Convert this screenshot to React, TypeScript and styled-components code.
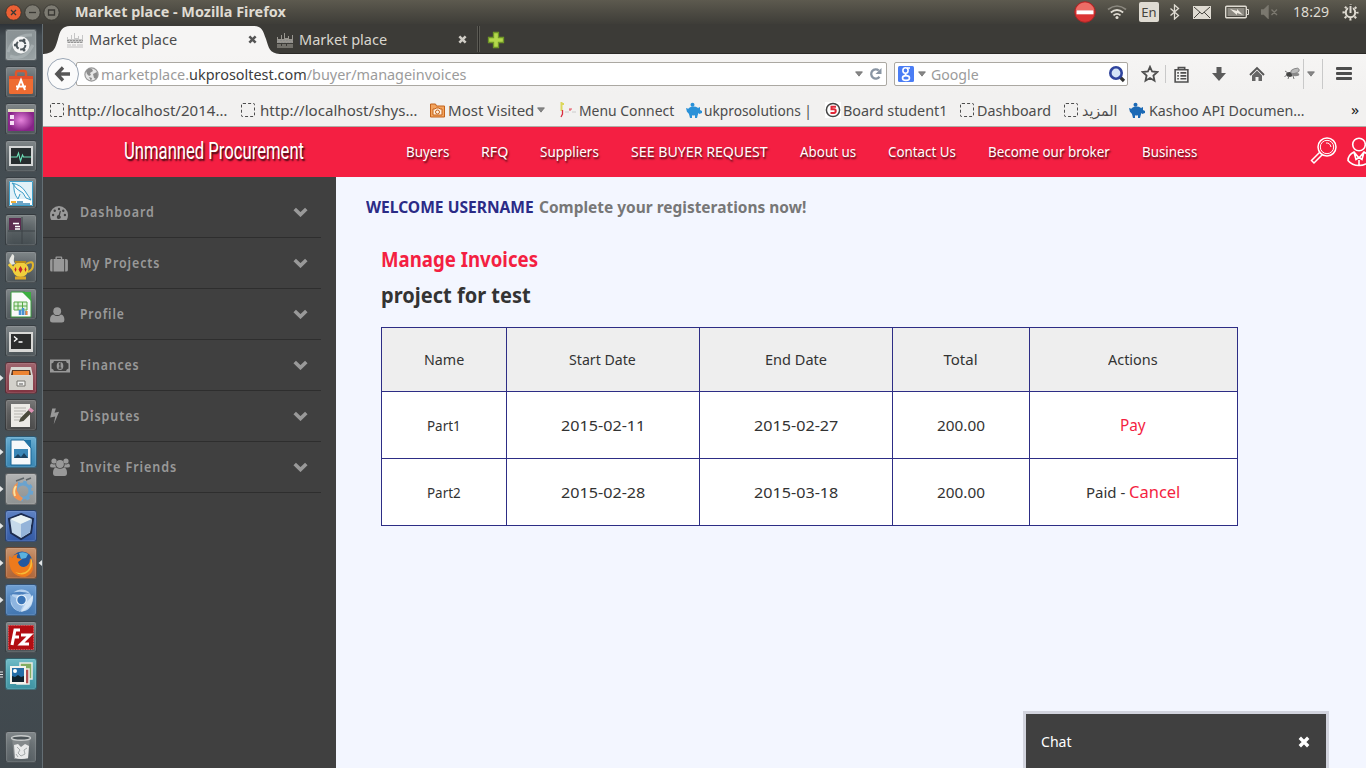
import React, { useLayoutEffect, useRef, useState } from "react";
import styled, { createGlobalStyle } from "styled-components";

const UI = `"Noto Sans", "Open Sans", "DejaVu Sans", sans-serif`;

const Global = createGlobalStyle`
  * { box-sizing: border-box; }
  body { margin: 0; overflow: hidden; font-family: ${UI}; }
  svg { display: block; flex: none; }
`;

/* ---------- text fitted to a fixed width ---------- */

const FitBox = styled.span<{ $w: number; $ml: number }>`
  display: block;
  flex: none;
  width: ${(p) => p.$w}px;
  margin-left: ${(p) => p.$ml}px;
  white-space: pre;
`;
const FitInner = styled.span`
  display: inline-block;
  transform-origin: 0 50%;
`;
function Fit({ w, ml = 0, children, className }: { w: number; ml?: number; children: React.ReactNode; className?: string }) {
  const ref = useRef<HTMLSpanElement>(null);
  const [k, setK] = useState(1);
  useLayoutEffect(() => {
    if (ref.current) setK(w / ref.current.offsetWidth);
  }, [w, children]);
  return (
    <FitBox $w={w} $ml={ml} className={className}>
      <FitInner ref={ref} style={{ transform: `scaleX(${k})` }}>{children}</FitInner>
    </FitBox>
  );
}

const Slot = styled.div<{ $ml?: number; $w?: number }>`
  flex: none;
  display: flex;
  justify-content: center;
  margin-left: ${(p) => p.$ml ?? 0}px;
  width: ${(p) => (p.$w ? p.$w + "px" : "auto")};
`;

/* ---------- desktop ---------- */

const Desktop = styled.div`
  width: 1366px;
  height: 768px;
  display: flex;
  flex-direction: column;
  overflow: hidden;
`;
const TopPanel = styled.div`
  height: 24px;
  flex: none;
  display: flex;
  align-items: center;
  padding-left: 5px;
  background: linear-gradient(#5d5a4f, #4d4b43 50%, #3e3d38);
`;
const PanelTitle = styled(Fit)`
  font-size: 14px;
  font-weight: 700;
  line-height: 24px;
  color: #dfdbd2;
`;
const Clock = styled(Fit)`
  font-size: 14.5px;
  line-height: 22px;
  padding-bottom: 2px;
  color: #dfdbd2;
`;
const LangBox = styled.div`
  width: 20px;
  height: 20px;
  margin-left: 12px;
  border-radius: 2px;
  background: #dfdbd2;
  color: #45433d;
  font-size: 13px;
  line-height: 20px;
  display: flex;
  justify-content: center;
`;
const Spacer = styled.div`
  flex: 1;
`;
const Workspace = styled.div`
  flex: 1;
  display: flex;
  min-height: 0;
`;
const Launcher = styled.div`
  width: 43px;
  flex: none;
  display: flex;
  flex-direction: column;
  gap: 5px;
  padding: 5px 0 5px 5px;
  background: linear-gradient(#2e3338 0, #434b50 12px, #465056 60%, #40484d);
  border-right: 1px solid #646e74;
`;
const Tile = styled.div<{ $bg: string; $last?: boolean }>`
  position: relative;
  width: 32px;
  height: 32px;
  flex: none;
  margin-top: ${(p) => (p.$last ? "36px" : "0")};
  border-radius: 3px;
  background: ${(p) => p.$bg};
  border: 1px solid rgba(30, 36, 40, 0.45);
  box-shadow: inset 0 0 0 1px rgba(255, 255, 255, 0.1), inset 0 6px 8px rgba(255, 255, 255, 0.12);
  display: flex;
  align-items: center;
  justify-content: center;
`;
const Pip = styled.svg<{ $right?: boolean }>`
  position: absolute;
  top: 12px;
  ${(p) => (p.$right ? "right: -6px;" : "left: -6px;")}
`;

const GREY = "linear-gradient(#70777a, #4c5458)";
type App = { bg: string; run?: boolean; multi?: boolean; focus?: boolean; last?: boolean; art: React.ReactNode };
const apps: App[] = [
  { bg: "linear-gradient(#7d8689, #99a2a4)", art: <><path d="M2 22Q8 4 26 5M4 26Q18 32 27 15" stroke="#b3babc" strokeWidth="3" fill="none" opacity=".6" /><circle cx="15" cy="15" r="8.500" fill="#f4f5f5" /><circle cx="15" cy="15" r="4.400" fill="none" stroke="#4c555a" strokeWidth="2" strokeDasharray="7.600 1.600" /><circle cx="9.300" cy="15" r="1.500" fill="#4c555a" /><circle cx="18" cy="9.900" r="1.500" fill="#4c555a" /><circle cx="18" cy="20.100" r="1.500" fill="#4c555a" /></> },
  { bg: GREY, art: <><path d="M10 9V6q0-2 2-2h6q2 0 2 2v3" stroke="#e0562b" strokeWidth="2.400" fill="none" /><path d="M3 9h24v16.500q0 1.500-1.500 1.500H4.500Q3 27 3 25.500z" fill="#ee6c32" /><path d="M3 9h24v3H3z" fill="#e14f2c" /><path d="M11 23l4-10 4 10M10 19.500h10" stroke="#fff" strokeWidth="2" fill="none" /></> },
  { bg: GREY, art: <><defs><radialGradient id="pu"><stop offset="0" stopColor="#e684dc" /><stop offset="1" stopColor="#872487" /></radialGradient></defs><path d="M2 5h26v22H2z" fill="url(#pu)" /><path d="M2 5h26v3H2z" fill="#e9e4c4" /><path d="M4 11h4v4H4zM4 17h4v4H4z" fill="#f6dff5" /></> },
  { bg: GREY, art: <><path d="M3 5h24v20H3z" fill="#d5d7d7" /><path d="M5 7h20v16H5z" fill="#262c2e" /><path d="M5 16h6l1.500-4 2 8 2-6 1 2H25" stroke="#6fe0b8" fill="none" strokeWidth="1.100" /></> },
  { bg: GREY, art: <><path d="M3 3h24v25H3z" fill="#fff" /><path d="M3.500 3.500h23v24h-23z" fill="none" stroke="#3d9dc7" /><path d="M4 4h22v17H4z" fill="#e2f1f8" /><path d="M6 5q9 2 13 8t6 9l-5-2-3-5-6-4zM8 6q-1 9 4 15l2-5" fill="#f5fafc" stroke="#3d9dc7" /><path d="M5 24h5" stroke="#f1b13b" strokeWidth="2" /><path d="M11 24h6M6 26h18" stroke="#3e88b5" strokeWidth="1.500" /></> },
  { bg: "linear-gradient(#6b7275, #454d51)", art: <><path d="M16 2v27M2 16h27" stroke="#3c4347" /><path d="M3 3h12v12H3z" fill="#5b2c50" /><path d="M7 8.500h6M9 11.500h5M9 14h5" stroke="#fff" strokeWidth="1.400" /></> },
  { bg: GREY, art: <><path d="M5 13q-3-4-1-7t2-4q3 1 2 4t1 6" fill="#e7e7e2" /><path d="M20 12q7-4 7 1t-5 7" stroke="#e1b52a" strokeWidth="2" fill="none" /><ellipse cx="14.500" cy="17.500" rx="8" ry="7.500" fill="#f1cf3c" /><path d="M3 12l6 7" stroke="#f1cf3c" strokeWidth="3" /><path d="M9 10h11" stroke="#b98b1c" strokeWidth="2" /><path d="M9 26h11" stroke="#dca828" strokeWidth="3" /><path d="M14.500 14l2 3.500-2 3.500-2-3.500zM19.500 15l1 2.500-1 2.500-1-2.500zM9.500 15l1 2.500-1 2.500-1-2.500z" fill="#c6242c" /></> },
  { bg: GREY, art: <><path d="M5 3h14l6 7v18H5z" fill="#fafafa" stroke="#3a9b3e" /><path d="M16 3h9v9z" fill="#3cae40" /><path d="M8 13h13v8H8z" fill="#dff2d9" stroke="#57a846" /><path d="M8 17h13M12 13v8M16.500 13v8" stroke="#57a846" /><path d="M14 26v-5M17 26v-7M20 26v-4" stroke="#4a92d0" strokeWidth="2.500" /><path d="M20.500 26v-4" stroke="#f0883a" strokeWidth="2" /></> },
  { bg: GREY, art: <><path d="M3 6h24v20H3z" fill="#d8d8d6" /><path d="M5 8h20v15H5z" fill="#2c2d2d" /><path d="M8 10.500l3 2.500-3 2.500M12.500 16h4" stroke="#fff" strokeWidth="1.400" fill="none" /></> },
  { bg: "linear-gradient(#95535d, #813441)", run: true, art: <><path d="M5 4h20l2 9H3z" fill="#d9d7d2" /><path d="M6 7h18l1 5H5z" fill="#5e3a24" /><path d="M7 8h16v4H7z" fill="#ec8432" /><path d="M3 13h24v14H3z" fill="#d3d1cb" /><path d="M11 18h8v5h-8z" fill="#f2f2f0" stroke="#77756f" /><path d="M13 21h4" stroke="#555" /></> },
  { bg: "linear-gradient(#676767, #474747)", art: <><path d="M5 4h19v23H5z" fill="#eceae6" /><path d="M8 8h12M8 11h12M8 14h9M8 17h7M8 20h8" stroke="#b5b3ae" /><path d="M13 22l1.500-4L23 9.500l3 3-8.500 8.500z" fill="#4a4a3c" /><path d="M22 10l2.500-2.500 3.500 3L25.500 13z" fill="#dc92b4" /></> },
  { bg: "linear-gradient(#57a3cb, #3483b1)", run: true, art: <><path d="M5 3h13l7 8v17H5z" fill="#f5f8fa" stroke="#1a6696" /><path d="M18 3l7 8V3z" fill="#2274a5" /><path d="M8 12h14v9H8z" fill="#3b87b7" /><path d="M8 21l4-4 3 3 3-4 4 5z" fill="#1c4260" /></> },
  { bg: "linear-gradient(#a9abab, #8f9292)", run: true, art: <><circle cx="17" cy="17" r="7" fill="none" stroke="#6aa3cf" strokeWidth="3" /><circle cx="17" cy="17" r="9" fill="none" stroke="#6aa3cf" strokeWidth="2.500" strokeDasharray="3.500 3.570" /><path d="M15 27Q4 24 7 14q2-4 5-6-1 4-1 8 1 5 6 8z" fill="#f2914d" /><path d="M9 22q-2-6 1-10" stroke="#f9e3a2" strokeWidth="2" fill="none" /><path d="M10 7l8-3M20 6l5-2" stroke="#5d6468" strokeWidth="1.500" /></> },
  { bg: "linear-gradient(#4c74bd, #3158a4)", run: true, art: <><path d="M15 3l12 5-2 14-10 6-10-6L3 8z" fill="#c5d9ea" stroke="#1c2c4f" strokeWidth="2" /><path d="M4 8l11 5 11-5-11-4z" fill="#eaf3f3" /><path d="M15 13l11-5-2 13-9 6z" fill="#94b4d9" /></> },
  { bg: "linear-gradient(#c1865c, #ae6437)", run: true, focus: true, art: <><circle cx="16" cy="14" r="10.500" fill="#23589f" /><path d="M13 5q5-2 9 1l-2 4-5 1z" fill="#5bb2df" /><path d="M3 8l3 2q2-4 6-4-2 2-1 4l5 1-4 3q1 5 6 5 6-1 6-9l2 3q4 12-7 16Q2 29 3 8z" fill="#ee7a1c" /><path d="M25 9q3 8-1 13-7 8-15 2 8 3 13-2 3-4 3-13z" fill="#f7ba36" /></> },
  { bg: "linear-gradient(#5d93cd, #4276b0)", run: true, art: <><circle cx="15.500" cy="15.500" r="11" fill="#b4d0ee" /><path d="M4 9q10-5 23 1-7-3-11 0z" fill="#4c80bd" /><path d="M4 10q1 14 10 17l4-9-8-5z" fill="#8db4df" /><path d="M27 10q1 12-12 17l5-9z" fill="#d4e5f6" /><circle cx="15.500" cy="15" r="5.400" fill="#e6f1fb" /><circle cx="15.500" cy="15" r="4.200" fill="#3a74b6" /></> },
  { bg: GREY, art: <><path d="M2.500 3.500h25v24h-25z" fill="#b20d12" stroke="#df4a4d" strokeDasharray="1.500 1" /><path d="M14 8H9L6 23M8 15h5M15 13h9l-9 9h8" stroke="#fff" strokeWidth="3" fill="none" /></> },
  { bg: "linear-gradient(#5eb2bf, #3c92a1)", multi: true, art: <><path d="M14 4h12v16H14z" fill="#82ad62" stroke="#ecebe5" strokeWidth="1.500" /><path d="M11 10h12v15H11z" fill="#b04e51" stroke="#ecebe5" strokeWidth="1.500" /><path d="M5 8h14v16H5z" fill="#246da6" stroke="#f4f3ed" strokeWidth="2" /><path d="M6 17l3 1 3-2 3 2 3-1v6H6z" fill="#10222d" /><circle cx="9" cy="12" r="2" fill="#fff" /></> },
  { bg: "linear-gradient(#71787b, #565e62)", last: true, art: <><path d="M6 6h18l-2 21H8z" fill="#84898b" /><path d="M8 13l4-1 3 3 4-3 4 2-1 12q-7 2-13 0z" fill="#e8e9e9" /><path d="M11 15l3 3-2 3 3 3 4-2-1-4 3-2M10 22l2 3" stroke="#a4a9aa" fill="none" /><ellipse cx="15" cy="6" rx="9.500" ry="2.300" fill="#4b5357" stroke="#c9cccc" strokeWidth="1.500" /></> },
];

/* ---------- browser ---------- */

const Browser = styled.div`
  flex: 1;
  min-width: 0;
  display: flex;
  flex-direction: column;
`;
const TabStrip = styled.div`
  height: 30px;
  flex: none;
  display: flex;
  align-items: center;
  background: #3c3b37;
  border-bottom: 1px solid #2b2a27;
`;
const ActiveTab = styled.div`
  position: relative;
  height: 30px;
  width: 237px;
  flex: none;
  display: flex;
  align-items: center;
  padding-left: 24px;
  margin-bottom: -1px;
  color: #4c4c4c;
`;
const TabShape = styled.svg`
  position: absolute;
  inset: 0;
`;
const TabContent = styled.div`
  position: relative;
  display: flex;
  align-items: center;
  height: 30px;
  padding-top: 1px;
`;
const IdleTab = styled.div`
  height: 30px;
  width: 196px;
  flex: none;
  display: flex;
  align-items: center;
  padding: 1px 0 0;
  margin-left: -3px;
  margin-bottom: -1px;
  color: #d9d6ce;
`;
const TabText = styled(Fit)`
  font-size: 14.5px;
  line-height: 22px;
  padding-bottom: 2px;
`;
const TabDivider = styled.div`
  width: 3px;
  height: 26px;
  margin-left: 4px;
  border-left: 1px solid #5a5953;
  border-right: 1px solid #5a5953;
  background: #2b2a27;
`;
const NavBar = styled.div`
  height: 40px;
  flex: none;
  display: flex;
  align-items: center;
  padding-left: 4px;
  background: linear-gradient(#f6f5f4, #f2f1f0);
`;
const BackButton = styled.div`
  position: relative;
  width: 32px;
  height: 32px;
  flex: none;
  border-radius: 50%;
  border: 1px solid #9aa6b5;
  background: #fbfbfb;
  display: flex;
  align-items: center;
  justify-content: center;
`;
const Field = styled.div<{ $w: number; $ml: number; $pl: number }>`
  width: ${(p) => p.$w}px;
  height: 24px;
  margin-left: ${(p) => p.$ml}px;
  padding-left: ${(p) => p.$pl}px;
  flex: none;
  display: flex;
  align-items: center;
  background: #fff;
  border: 1px solid #aba8a2;
  border-radius: 2px;
`;
const UrlText = styled(Fit)`
  font-size: 15px;
  line-height: 22px;
  color: #9b9b9b;
  b { font-weight: 400; color: #3c3c3c; }
`;
const VSep = styled.div<{ $ml: number; $h: number }>`
  width: 1px;
  height: ${(p) => p.$h}px;
  margin-left: ${(p) => p.$ml}px;
  flex: none;
  background: #c9c9c9;
`;
const Bookmarks = styled.div`
  height: 33px;
  flex: none;
  display: flex;
  align-items: center;
  background: #f2f1f0;
  border-bottom: 1px solid #b1aca6;
  color: #4c4c4c;
  padding-left: 7px;
`;
const BookmarkText = styled(Fit)`
  font-size: 14.5px;
  line-height: 22px;
`;
const Dashed = styled.div<{ $ml: number }>`
  width: 14px;
  height: 14px;
  margin-left: ${(p) => p.$ml}px;
  flex: none;
  border: 1px dashed #4d4d4d;
  border-radius: 2px;
`;
const Overflow = styled(Fit)`
  font-size: 14px;
  line-height: 22px;
  color: #222;
`;

/* ---------- page ---------- */

const PageHeader = styled.div`
  height: 50px;
  flex: none;
  display: flex;
  align-items: center;
  overflow: hidden;
  background: #f41f42;
  color: #fff;
`;
const Brand = styled(Fit)`
  font-family: Roboto, "Liberation Sans", sans-serif;
  font-size: 24.5px;
  line-height: 44px;
  padding-bottom: 2px;
  text-shadow: 2px 2px 2px rgba(0, 0, 0, 0.75);
`;
const NavLink = styled(Fit)`
  font-size: 15.3px;
  line-height: 46px;
  padding-bottom: 2px;
  text-shadow: 1px 2px 2px rgba(0, 0, 0, 0.7);
`;
const PageBody = styled.div`
  flex: 1;
  display: flex;
  min-height: 0;
`;
const Sidebar = styled.div`
  width: 293px;
  flex: none;
  padding: 10px 15px 0 0;
  background: #404040;
`;
const MenuRow = styled.div`
  height: 51px;
  display: flex;
  align-items: center;
  padding: 0 13px 0 7px;
  border-bottom: 1px solid #2e2e2e;
  color: #999;
`;
const MenuIcon = styled.div`
  width: 30px;
  flex: none;
  padding-top: 1px;
`;
const MenuText = styled(Fit)`
  font-size: 13.5px;
  font-weight: 600;
  letter-spacing: 1px;
  line-height: 24px;
`;
const Content = styled.div`
  flex: 1;
  min-width: 0;
  background: #f3f6ff;
  padding: 15px 0 0 30px;
`;
const Welcome = styled.div`
  display: flex;
  height: 30px;
  font-size: 16.5px;
  line-height: 30px;
  font-weight: 700;
`;
const WelcomeName = styled(Fit)`
  color: #2b2b86;
`;
const WelcomeNote = styled(Fit)`
  color: #777;
`;
const Section = styled.div`
  padding: 19px 0 0 15px;
`;
const Title = styled(Fit)`
  font-size: 21px;
  font-weight: 700;
  line-height: 36px;
  color: #f41f42;
`;
const ProjectName = styled(Fit)`
  font-size: 21.5px;
  font-weight: 700;
  line-height: 36px;
  color: #333;
`;
const Table = styled.div`
  display: grid;
  grid-template-columns: 124px 192px 192px 136px 207px;
  grid-template-rows: 63px 66px 66px;
  gap: 1px;
  width: 857px;
  margin-top: 14px;
  padding: 1px;
  background: #2d2d85;
`;
const Cell = styled.div<{ $head?: boolean }>`
  display: flex;
  align-items: center;
  justify-content: center;
  padding: 0 1px 1px 0;
  background: ${(p) => (p.$head ? "#eee" : "#fff")};
  color: #333;
  font-size: 15px;
  line-height: 20px;
`;
const Action = styled(Fit)`
  font-size: 16.5px;
  line-height: 20px;
  color: #f41f42;
`;
const Chat = styled.div`
  position: absolute;
  left: 1023px;
  top: 711px;
  width: 306px;
  height: 57px;
  border: 3px solid #d2d4de;
  border-bottom: 0;
  background: #404040;
  color: #fff;
  display: flex;
  align-items: center;
  padding: 2px 16px 0 15px;
  font-size: 15px;
`;
const ChatLabel = styled(Fit)`
  padding-bottom: 2px;
`;

/* ---------- small drawings ---------- */

const Close = ({ c, s = 9 }: { c: string; s?: number }) => (
  <svg width={s} height={s} viewBox="0 0 10 10"><path d="M1.500 1.500l7 7M8.500 1.500l-7 7" stroke={c} strokeWidth="2.800" /></svg>
);
const Caret = () => <svg width="8" height="6" viewBox="0 0 9 7"><path d="M.5 1h8L4.500 6z" fill="#888" stroke="#666" strokeWidth=".8" /></svg>;
const Skyline = ({ c }: { c: string }) => (
  <svg width="16" height="16" viewBox="0 0 16 16"><path d="M0 5h1v2h3V3h1v4h2V1h1v5h3V4h1v3h3V3h1v8H0z" fill={c} opacity=".85" /><path d="M0 8.500h16M1 10.500h15" stroke="#8b8b8b" strokeDasharray="2 1" opacity=".8" /><path d="M0 13h4M5 13h4M10 13h6M0 15h16" stroke={c} strokeWidth="1.200" /></svg>
);
const Pig = ({ c }: { c: string }) => (
  <svg width="16" height="16" viewBox="0 0 16 16"><circle cx="6.500" cy="2.700" r="2" fill={c} /><ellipse cx="7.500" cy="9" rx="6" ry="4.600" fill={c} /><path d="M0 6l3 1v4l-2-1zM12 6l2-1v3l2 1v2l-3 1zM3 12h3v4H4zM9 12h3l-1 4H9z" fill={c} /></svg>
);
const Chevron = () => <svg width="15" height="10" viewBox="0 0 15 10"><path d="M1.700 2l5.800 5.600L13.300 2" stroke="#999" strokeWidth="3.600" fill="none" /></svg>;

const WindowButton = ({ bg, d }: { bg: string; d: string }) => (
  <svg width="17" height="17" viewBox="0 0 17 17"><circle cx="8.500" cy="8.500" r="7.700" fill={bg} stroke="#33322d" strokeWidth=".8" /><path d={d} stroke="#3a3934" strokeWidth="1.300" fill="none" /></svg>
);

const menu: { label: string; w: number; icon: React.ReactNode }[] = [
  { label: "Dashboard", w: 75, icon: <svg width="18" height="16" viewBox="0.500 0 18 16"><path d="M9.500 1A9 9 0 0 0 .5 10q0 2.700 1.300 5h15.400q1.300-2.300 1.300-5a9 9 0 0 0-9-9z" fill="#999" /><g fill="#404040"><circle cx="3.600" cy="10" r="1.200" /><circle cx="5.200" cy="5.800" r="1.200" /><circle cx="9.500" cy="4" r="1.200" /><circle cx="13.800" cy="5.800" r="1.200" /><circle cx="15.400" cy="10" r="1.200" /><path d="M10.400 5.800l1 .3-1 4.300a2 2 0 1 1-1.300-.3z" /></g></svg> },
  { label: "My Projects", w: 80, icon: <svg width="18" height="16" viewBox="0.400 0 17.500 15.500"><path d="M.5 4.500q0-1.500 1.500-1.500h.9v12H2q-1.500 0-1.500-1.500zM3.800 3h1.900V1.500Q5.700.5 6.700.5h4.600q1 0 1 1V3h1.900v12H3.800zM7 3h4V1.700H7zM15.100 3h.9q1.800 0 1.800 1.500v9q0 1.500-1.800 1.500h-.9z" fill="#999" fillRule="evenodd" /></svg> },
  { label: "Profile", w: 45, icon: <svg width="15" height="16" viewBox="0 0 15 16"><circle cx="7.200" cy="4.200" r="3.900" fill="#999" /><path d="M3.500 7.500Q5 9 7.200 9t3.700-1.500Q14.400 8 14.400 13q0 2.500-2.400 2.500H2.600Q0 15.500 0 13q0-5 3.500-5.500z" fill="#999" /></svg> },
  { label: "Finances", w: 60, icon: <svg width="20" height="14" viewBox="0 0 20 14"><path fillRule="evenodd" d="M0 .5h20v13H0zM4 2q-.3 2-2.500 2.500v5Q3.700 10 4 12h12q.3-2 2.500-2.500v-5Q16.300 4 16 2z" fill="#999" /><ellipse cx="10" cy="7" rx="3.300" ry="4.100" fill="#999" /><path d="M9 5.500l1-1v4.300M8.700 9.200h2.700" stroke="#404040" strokeWidth="1.200" fill="none" /></svg> },
  { label: "Disputes", w: 60, icon: <svg width="10" height="17" viewBox="0 0 10 17"><path d="M2.200.5h3.700L4.500 4.700l4.600-1L3.700 16.500l1.500-8.100L.2 9.600z" fill="#999" /></svg> },
  { label: "Invite Friends", w: 97, icon: <svg width="20" height="19" viewBox="0 0 20 19"><g fill="#999"><circle cx="4" cy="3" r="2.600" /><circle cx="16" cy="3" r="2.600" /><circle cx="10" cy="6" r="3.900" /><path d="M1.500 5.500Q4 7 5.300 6q0 2 1 3.500H2.500Q0 9.500 0 8q0-2 1.500-2.500zM18.500 5.500Q16 7 14.700 6q0 2-1 3.500h3.800q2.500 0 2.500-1.500 0-2-1.500-2.500z" /><path d="M6 9.500q4 2.500 8 0 3 .7 3 5.500 0 3-2.500 3h-9Q3 18 3 15q0-4.800 3-5.500z" /></g></svg> },
];

const nav: [string, number][] = [["Buyers", 43], ["RFQ", 27], ["Suppliers", 59], ["SEE BUYER REQUEST", 137], ["About us", 56], ["Contact Us", 68], ["Become our broker", 122], ["Business", 55]];

export default function App() {
  return (
    <Desktop>
      <Global />
      <TopPanel>
        <WindowButton bg="#ec6034" d="M6 6l5 5M11 6l-5 5" />
        <Slot $ml={2}><WindowButton bg="#7d7b72" d="M5 8.500h7" /></Slot>
        <Slot $ml={2}><WindowButton bg="#7d7b72" d="M5.500 6h6v5h-6z" /></Slot>
        <PanelTitle w={211} ml={15}>Market place - Mozilla Firefox</PanelTitle>
        <Spacer />
        <svg width="22" height="22" viewBox="0 0 22 22"><circle cx="11" cy="11" r="10.300" fill="#db3434" stroke="#a92727" /><path d="M1.700 9Q4 1.500 11 1.500T20.300 9z" fill="#ed6d66" /><path d="M2.500 9.300h17v4h-17z" fill="#fff" /></svg>
        <Slot $ml={11}><svg width="20" height="16" viewBox="0 0 20 16"><g fill="none" strokeWidth="1.700"><path d="M1 5.500q9-7 18 0" stroke="#8b887f" /><path d="M3.800 8.500q6.200-5 12.400 0" stroke="#dfdbd2" /><path d="M6.500 11.300q3.500-2.800 7 0" stroke="#dfdbd2" /></g><circle cx="10" cy="13.500" r="1.500" fill="#dfdbd2" /></svg></Slot>
        <LangBox>En</LangBox>
        <Slot $ml={10}><svg width="11" height="16" viewBox="0 0 11 16"><path d="M1.500 4.500l8 7-4 3.500V1l4 3.500-8 7" stroke="#dfdbd2" strokeWidth="1.300" fill="none" /></svg></Slot>
        <Slot $ml={13}><svg width="18" height="13" viewBox="0 0 18 13"><path d="M0 0h18v13H0z" fill="#dfdbd2" /><path d="M1 1l8 7 8-7M1 12l6-6M17 12l-6-6" stroke="#45433d" fill="none" /></svg></Slot>
        <Slot $ml={14}><svg width="24" height="14" viewBox="0 0 24 14"><rect x=".7" y="1.200" width="20.600" height="11.600" rx="1" fill="none" stroke="#dfdbd2" strokeWidth="1.400" /><path d="M2.500 3h17v8h-17z" fill="#8d8a82" /><path d="M22 4.500h1.500v5H22" fill="none" stroke="#dfdbd2" /><path d="M5 4l7 2V4l6 6-6-2v2z" fill="#eeeae1" /></svg></Slot>
        <Slot $ml={12}><svg width="18" height="14" viewBox="0 0 18 14"><path d="M0 5h3l4-4v12L3 9H0zM10.500 4.500l5.500 5.500M16 4.500L10.500 10" fill="#7b786f" stroke="#7b786f" strokeWidth="1.400" /></svg></Slot>
        <Clock w={36} ml={14}>18:29</Clock>
        <Slot $ml={13}><svg width="17" height="17" viewBox="0 0 17 17"><circle cx="8.500" cy="8.500" r="4.700" fill="none" stroke="#dfdbd2" strokeWidth="2" /><circle cx="8.500" cy="8.500" r="6.800" fill="none" stroke="#dfdbd2" strokeWidth="2.400" strokeDasharray="2 3.340" strokeDashoffset="1" /><path d="M8.500 1v7" stroke="#494740" strokeWidth="4.500" /><path d="M8.500 2v7" stroke="#dfdbd2" strokeWidth="2" /></svg></Slot>
        <Slot $ml={7} />
      </TopPanel>

      <Workspace>
        <Launcher>
          {apps.map((a, i) => (
            <Tile key={i} $bg={a.bg} $last={a.last}>
              <svg width="30" height="30" viewBox="0 0 30 30">{a.art}</svg>
              {a.run && <Pip width="4" height="6" viewBox="0 0 4 6"><path d="M0 0l3.500 3L0 6z" fill="#e3e6e7" /></Pip>}
              {a.multi && <Pip width="4" height="7" viewBox="0 0 4 7"><path d="M0 1h3M0 3.500h3M0 6h3" stroke="#e3e6e7" /></Pip>}
              {a.focus && <Pip $right width="4" height="6" viewBox="0 0 4 6"><path d="M4 0L.5 3 4 6z" fill="#e3e6e7" /></Pip>}
            </Tile>
          ))}
        </Launcher>

        <Browser>
          <TabStrip>
            <ActiveTab>
              <TabShape width="237" height="30" viewBox="0 0 237 30"><path d="M0 30C12 29 12 24 15 15 17 7 19 2 27 2H211C219 2 220 7 223 15 226 24 226 29 237 30z" fill="#f6f5f4" /></TabShape>
              <TabContent>
                <Skyline c="#bdbdbd" />
                <TabText w={88} ml={6}>Market place</TabText>
                <Slot $ml={71}><Close c="#555" /></Slot>
              </TabContent>
            </ActiveTab>
            <IdleTab>
              <Skyline c="#a9a7a0" />
              <TabText w={88} ml={6}>Market place</TabText>
              <Slot $ml={71}><Close c="#d0cdc6" /></Slot>
            </IdleTab>
            <TabDivider />
            <Slot $ml={7}><svg width="18" height="20" viewBox="0 -2 18 20"><path d="M6.500 1.500h5v5h5v5h-5v5h-5v-5h-5v-5h5z" fill="#b4d84c" stroke="#6f9627" strokeWidth="1.300" /></svg></Slot>
          </TabStrip>

          <NavBar>
            <BackButton><svg width="18" height="18" viewBox="0 0 18 18"><path d="M9 2.500L2.800 9 9 15.500M3.500 9H16" stroke="#555" strokeWidth="3.300" fill="none" /></svg></BackButton>
            <Field $w={811} $ml={-3} $pl={7}>
              <svg width="15" height="15" viewBox="0 0 15 15"><circle cx="7.500" cy="7.500" r="6.600" fill="#e6e6e6" stroke="#999" strokeWidth="1.200" /><path d="M2 4q3-4 6-2l1 2-3 2 1 2-2 1-2-2zM9 7l4-2q2 4-1 7l-2-1zM5 10l3 1-1 3z" fill="#8c8c8c" /></svg>
              <UrlText w={365} ml={2}>marketplace.<b>ukprosoltest.com</b>/buyer/manageinvoices</UrlText>
              <Slot $ml={389}><Caret /></Slot>
              <Slot $ml={6}><svg width="14" height="14" viewBox="0 0 14 14"><path d="M10.500 9.700A4.600 4.600 0 1 1 9.800 3.500" stroke="#8995a3" strokeWidth="2.300" fill="none" /><path d="M12.500 1v6h-6z" fill="#8995a3" /></svg></Slot>
            </Field>
            <Field $w={234} $ml={7} $pl={3}>
              <svg width="16" height="16" viewBox="0 0 16 16"><rect width="16" height="16" rx="1.500" fill="#4a7df5" /><g fill="none" stroke="#fff" strokeWidth="1.600"><ellipse cx="7.500" cy="4.500" rx="2.600" ry="2.800" /><path d="M9 2h3M8 7.500q-1.500 1 .5 2" /><ellipse cx="8" cy="12" rx="3.500" ry="2.400" /></g></svg>
              <Slot $ml={4}><Caret /></Slot>
              <UrlText w={48} ml={5}>Google</UrlText>
              <Slot $ml={129}><svg width="18" height="18" viewBox="0 0 18 18"><path d="M12 12l4 4" stroke="#333" strokeWidth="3.200" /><circle cx="8" cy="8" r="5.700" fill="#d5e4f7" stroke="#2f449d" strokeWidth="2.600" /></svg></Slot>
            </Field>
            <Slot $ml={13}><svg width="18" height="18" viewBox="0 0 18 18"><path d="M9 1.800l2.100 4.700 5.200.5-3.900 3.500 1.100 5.200L9 13l-4.500 2.700 1.100-5.200L1.700 7l5.200-.5z" fill="none" stroke="#4f4f4f" strokeWidth="1.800" /></svg></Slot>
            <VSep $ml={6} $h={18} />
            <Slot $ml={7}><svg width="17" height="17" viewBox="0 0 16 16"><path d="M2 3.500h12V15H2zM5 3V1.500h6V3M4 6.500h1.500M7 6.500h5.500M4 9.300h1.500M7 9.300h5.500M4 12h1.500M7 12h5.500" stroke="#4f4f4f" strokeWidth="1.500" fill="none" /></svg></Slot>
            <Slot $ml={21}><svg width="16" height="16" viewBox="0 0 16 16"><path d="M5.500 1h5v6H15l-7 8-7-8h4.500z" fill="#5b5b5b" /></svg></Slot>
            <Slot $ml={22}><svg width="16" height="16" viewBox="0 0 16 16"><path d="M1 9l7-7 7 7" stroke="#555" strokeWidth="1.900" fill="none" /><path d="M3 9.500l5-5 5 5V15H9.500v-4h-3v4H3z" fill="#666" /></svg></Slot>
            <Slot $ml={19}><svg width="17" height="16" viewBox="0 0 17 16"><ellipse cx="5.500" cy="8.500" rx="3.300" ry="2.400" fill="#444" /><ellipse cx="11" cy="5" rx="4.500" ry="2.400" transform="rotate(-20 11 5)" fill="#b9b9b9" stroke="#777" strokeWidth=".7" /><ellipse cx="11.500" cy="8.500" rx="3.800" ry="1.700" fill="#888" /><path d="M5 10l-1 3M9 10l1 3M4 7L1 5M2.500 9L.5 11" stroke="#777" fill="none" /></svg></Slot>
            <VSep $ml={2} $h={30} />
            <Slot $ml={3}><Caret /></Slot>
            <VSep $ml={7} $h={30} />
            <Slot $ml={13}><svg width="16" height="16" viewBox="0 0 16 16"><path d="M1 2.500h14M1 7.500h14M1 12.500h14" stroke="#4d4d4d" strokeWidth="2.800" strokeLinecap="round" /></svg></Slot>
          </NavBar>

          <Bookmarks>
            <Dashed $ml={0} />
            <BookmarkText w={160} ml={3}>http://localhost/2014…</BookmarkText>
            <Dashed $ml={14} />
            <BookmarkText w={157} ml={5}>http://localhost/shys…</BookmarkText>
            <Slot $ml={13}><svg width="15" height="15" viewBox="0 0 15 15"><path d="M.5 14V1h5l1 2h8v11z" fill="#f3a45e" stroke="#c3621a" /><path d="M3 6h2l1-1h3l1 1h2v6H3z" fill="#fff0df" stroke="#c3621a" /><circle cx="7.500" cy="9" r="2" fill="none" stroke="#c3621a" /></svg></Slot>
            <BookmarkText w={86} ml={3}>Most Visited</BookmarkText>
            <Slot $ml={3}><Caret /></Slot>
            <Slot $ml={15}><svg width="16" height="16" viewBox="0 0 16 16"><path d="M1.500 0v9M1 2h3" stroke="#dcd75b" strokeWidth="2" /><path d="M2.500 8v4L1 15" stroke="#d92e41" strokeWidth="1.300" fill="none" /><path d="M9 7h3M10 7v2" stroke="#e64c5c" /><path d="M5 10h4M12 10h4" stroke="#ccc" /></svg></Slot>
            <BookmarkText w={95} ml={3}>Menu Connect</BookmarkText>
            <Slot $ml={12}><Pig c="#2a91d8" /></Slot>
            <BookmarkText w={108} ml={2}>ukprosolutions |</BookmarkText>
            <Slot $ml={13}><svg width="16" height="16" viewBox="0 0 16 16"><path d="M0 0h16v16H0z" fill="#fff" /><circle cx="8" cy="8" r="6.600" fill="#fff" stroke="#444" strokeWidth="1.500" /><path d="M11 4.800H6.500v2.500h2.700q1.500 0 1.500 1.800T9 11H5.500" stroke="#e02636" strokeWidth="2" fill="none" /></svg></Slot>
            <BookmarkText w={104} ml={2}>Board student1</BookmarkText>
            <Dashed $ml={13} />
            <BookmarkText w={74} ml={3}>Dashboard</BookmarkText>
            <Dashed $ml={13} />
            <BookmarkText w={35} ml={4}>المزيد</BookmarkText>
            <Slot $ml={12}><Pig c="#1b69b5" /></Slot>
            <BookmarkText w={156} ml={4}>Kashoo API Documen…</BookmarkText>
            <Overflow w={8} ml={46}>»</Overflow>
          </Bookmarks>

          <PageHeader>
            <Brand w={180} ml={81}>Unmanned Procurement</Brand>
            <Slot $ml={70} />
            {nav.map(([t, w]) => <NavLink key={t} w={w} ml={32}>{t}</NavLink>)}
            <Slot $ml={113}><svg width="28" height="30" viewBox="0 1 28 30"><g fill="none" stroke="#fff" strokeWidth="1.500"><circle cx="17" cy="11" r="9" /><circle cx="17" cy="11" r="6.700" strokeWidth="1" /><path d="M16 7q4-.5 5 4" strokeWidth="1" /><path d="M10 16l-8.500 8.500 2.500 2.500 8.500-8.500" /></g></svg></Slot>
            <Slot $ml={9}><svg width="24" height="30" viewBox="0 0 24 30"><g fill="none" stroke="#fff" strokeWidth="1.600"><circle cx="12" cy="7.500" r="6.300" /><path d="M7 15Q1 18 1 23.500q4 5 11 5t11-5q0-5.500-6-8.500l-5 6zM7 15l2 7.500 3-2 3 2 2-7.500M12 23v5" /></g></svg></Slot>
          </PageHeader>

          <PageBody>
            <Sidebar>
              {menu.map((m) => (
                <MenuRow key={m.label}>
                  <MenuIcon>{m.icon}</MenuIcon>
                  <MenuText w={m.w}>{m.label}</MenuText>
                  <Spacer />
                  <Chevron />
                </MenuRow>
              ))}
            </Sidebar>
            <Content>
              <Welcome>
                <WelcomeName w={168}>WELCOME USERNAME</WelcomeName>
                <WelcomeNote w={267} ml={5}>Complete your registerations now!</WelcomeNote>
              </Welcome>
              <Section>
                <Title w={157}>Manage Invoices</Title>
                <ProjectName w={150}>project for test</ProjectName>
                <Table>
                  <Cell $head><Fit w={40}>Name</Fit></Cell>
                  <Cell $head><Fit w={67}>Start Date</Fit></Cell>
                  <Cell $head><Fit w={62}>End Date</Fit></Cell>
                  <Cell $head><Fit w={34}>Total</Fit></Cell>
                  <Cell $head><Fit w={50}>Actions</Fit></Cell>
                  <Cell><Fit w={34}>Part1</Fit></Cell>
                  <Cell><Fit w={84}>2015-02-11</Fit></Cell>
                  <Cell><Fit w={84}>2015-02-27</Fit></Cell>
                  <Cell><Fit w={48}>200.00</Fit></Cell>
                  <Cell><Action w={26}>Pay</Action></Cell>
                  <Cell><Fit w={34}>Part2</Fit></Cell>
                  <Cell><Fit w={84}>2015-02-28</Fit></Cell>
                  <Cell><Fit w={84}>2015-03-18</Fit></Cell>
                  <Cell><Fit w={48}>200.00</Fit></Cell>
                  <Cell><Fit w={39}>Paid -</Fit><Action w={51} ml={4}>Cancel</Action></Cell>
                </Table>
              </Section>
            </Content>
          </PageBody>
        </Browser>
      </Workspace>
      <Chat>
        <ChatLabel w={31}>Chat</ChatLabel>
        <Spacer />
        <Close c="#fff" s={12} />
      </Chat>
    </Desktop>
  );
}
